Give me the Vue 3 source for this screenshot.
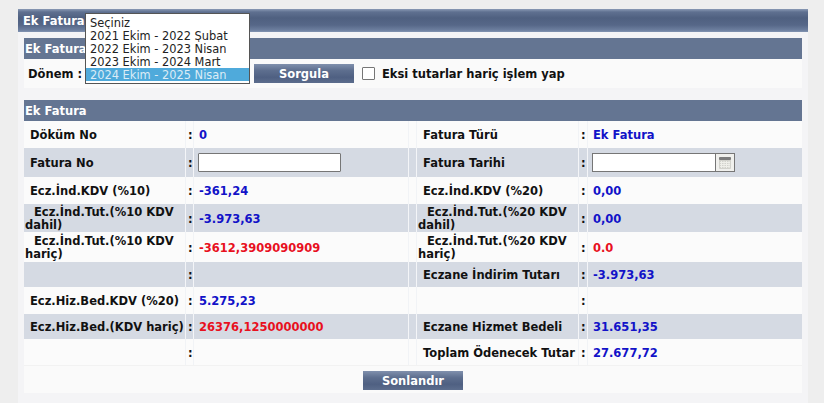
<template>
    <div class="page">
        <div class="panel">
            <div class="panel-title">Ek Fatura</div>
            <div class="panel-body">
                <div class="section-title">Ek Fatura</div>
                <div class="filter">
                    <span class="filter-label">Dönem :</span>
                    <button class="btn">Sorgula</button>
                    <span class="check"></span>
                    <span class="check-label">Eksi tutarlar hariç işlem yap</span>
                </div>
                <div class="section-title second">Ek Fatura</div>
                <table class="form">
                    <colgroup>
                        <col style="width:162px"><col style="width:8px"><col style="width:215px">
                        <col style="width:8px">
                        <col style="width:162px"><col style="width:9px"><col style="width:214px">
                    </colgroup>
                    <tbody>
                        <tr v-for="row in rows" :key="row.h + row.l1" :class="{ alt: row.alt }" :style="{ height: row.h + 'px' }">
                            <td class="label" :class="{ wrap: row.wrap }">{{ row.l1 }}</td>
                            <td class="colon">:</td>
                            <td class="value" :class="[row.c1, { 'has-input': row.input }]">
                                <input v-if="row.input" class="text-input" type="text">
                                <template v-else>{{ row.v1 }}</template>
                            </td>
                            <td class="gap"></td>
                            <td class="label" :class="{ wrap: row.wrap }">{{ row.l2 }}</td>
                            <td class="colon">:</td>
                            <td class="value" :class="[row.c2, { 'has-input': row.input }]">
                                <div v-if="row.input" class="date-box">
                                    <span class="date-input"></span>
                                    <span class="date-btn">
                                        <svg width="12" height="12" viewBox="0 0 12 12">
                                            <rect x="0" y="0" width="12" height="12" rx="1" fill="#d2d2cc"/>
                                            <rect x="0" y="0" width="12" height="3" rx="1" fill="#7c7c7c"/>
                                            <path d="M1 5.5h10M1 7.5h10M1 9.5h10M2.5 4v7M5 4v7M7.5 4v7M10 4v7" stroke="#efefe9" stroke-width="1" fill="none"/>
                                        </svg>
                                    </span>
                                </div>
                                <template v-else>{{ row.v2 }}</template>
                            </td>
                        </tr>
                    </tbody>
                </table>
                <div class="actions">
                    <button class="btn">Sonlandır</button>
                </div>
            </div>
        </div>
        <ul class="dropdown">
            <li v-for="(o, i) in options" :key="o" :class="{ selected: i === options.length - 1 }">{{ o }}</li>
        </ul>
    </div>
</template>

<script setup>
const options = [
    'Seçiniz',
    '2021 Ekim - 2022 Şubat',
    '2022 Ekim - 2023 Nisan',
    '2023 Ekim - 2024 Mart',
    '2024 Ekim - 2025 Nisan',
]

const rows = [
    { h: 27, l1: 'Döküm No', v1: '0', c1: 'blue', l2: 'Fatura Türü', v2: 'Ek Fatura', c2: 'blue' },
    { h: 29, alt: true, input: true, l1: 'Fatura No', l2: 'Fatura Tarihi' },
    { h: 27, l1: 'Ecz.İnd.KDV (%10)', v1: '-361,24', c1: 'blue', l2: 'Ecz.İnd.KDV (%20)', v2: '0,00', c2: 'blue' },
    { h: 28, alt: true, wrap: true, l1: 'Ecz.İnd.Tut.(%10 KDV dahil)', v1: '-3.973,63', c1: 'blue', l2: 'Ecz.İnd.Tut.(%20 KDV dahil)', v2: '0,00', c2: 'blue' },
    { h: 30, wrap: true, l1: 'Ecz.İnd.Tut.(%10 KDV hariç)', v1: '-3612,3909090909', c1: 'red', l2: 'Ecz.İnd.Tut.(%20 KDV hariç)', v2: '0.0', c2: 'red' },
    { h: 25, alt: true, l1: '', v1: '', l2: 'Eczane İndirim Tutarı', v2: '-3.973,63', c2: 'blue' },
    { h: 27, l1: 'Ecz.Hiz.Bed.KDV (%20)', v1: '5.275,23', c1: 'blue', l2: '', v2: '' },
    { h: 25, alt: true, l1: 'Ecz.Hiz.Bed.(KDV hariç)', v1: '26376,1250000000', c1: 'red', l2: 'Eczane Hizmet Bedeli', v2: '31.651,35', c2: 'blue' },
    { h: 26, l1: '', v1: '', l2: 'Toplam Ödenecek Tutar', v2: '27.677,72', c2: 'blue' },
]
</script>

<style>
html, body { margin: 0; background: #eeeeee; }
</style>

<style scoped>
.page {
    position: relative; width: 824px; height: 403px; overflow: hidden;
    padding: 9px 16px 0 18px; box-sizing: border-box;
    background: #eeeeee; color: #111;
    font-family: "DejaVu Sans", Verdana, sans-serif; font-size: 11.5px; font-weight: bold;
}
.panel { width: 790px; background: #f4f4f6; height: 394px; }
.panel-title {
    height: 23px; line-height: 25px; padding-left: 5px; color: #fff;
    background: linear-gradient(#8a9ab5 0, #5f7090 3px, #4f6080 9px, #566788 16px, #6c7e9e 21px, #8294b2 23px);
}
.panel-body { padding: 6px 6px 0; }
.section-title {
    height: 21px; line-height: 22px; padding-left: 1px; color: #fff; background: #647592;
}
.section-title.second { margin-top: 12px; }
.filter {
    display: flex; align-items: center; height: 29px; padding-left: 4px; background: #fafafa;
}
.filter-label { width: 226px; padding-top: 1px; }
.btn {
    width: 100px; height: 19px; padding: 1px 0 0; border: 0; color: #fff; cursor: pointer;
    font: bold 11.5px "DejaVu Sans", Verdana, sans-serif;
    background: linear-gradient(#8090ad, #5d6e8e 35%, #4f6082 70%, #5c6d8d);
}
.check {
    width: 11px; height: 11px; margin-left: 8px; border: 1px solid #767676; border-radius: 1px; background: #fff;
}
.check-label { margin-left: 7px; padding-top: 1px; }
.form { width: 778px; border-spacing: 0; border-collapse: separate; table-layout: fixed; background: #fbfbfb; }
.form td { padding: 2px 0 0; vertical-align: middle; border-right: 1px solid #f1f3f6; line-height: 13px; }
.form td:last-child { border-right: 0; }
.form tr.alt td { background: #d5dae3; border-right-color: #f4f5f8; }
.form td.label { padding-left: 6px; }
.form td.label.wrap { padding-left: 1px; text-indent: 9px; }
.form td.colon { padding-left: 2px; }
.form td.value { padding-left: 5px; }
.form td.value.has-input { padding-left: 4px; padding-top: 0; }
.blue { color: #1212c8; }
.red { color: #e8101e; }
.text-input {
    display: block; width: 143px; height: 19px; box-sizing: border-box; padding: 0;
    border: 1px solid #767676; border-radius: 1px; background: #fff;
}
.date-box {
    display: flex; width: 143px; height: 19px; box-sizing: border-box;
    border: 1px solid #767676; background: #fff;
}
.date-input { flex: 1; border-right: 1px solid #767676; }
.date-btn {
    width: 18px; display: flex; align-items: center; justify-content: center; background: #f0f0ed;
}
.actions {
    display: flex; justify-content: center; align-items: center; height: 28px; background: #fafafa;
    border-top: 1px solid #f2f2f2; box-sizing: border-box; padding-top: 1px;
}
.dropdown {
    position: absolute; left: 85px; top: 13px; width: 163px; margin: 0; padding: 2px 0 2px;
    list-style: none; background: #fff; border: 1px solid #555;
    font-weight: normal; font-size: 11.4px; color: #222;
}
.dropdown li { height: 13px; line-height: 15px; padding-left: 4px; overflow: hidden; }
.dropdown li.selected { background: #4faadb; color: #dcecf6; }
</style>
